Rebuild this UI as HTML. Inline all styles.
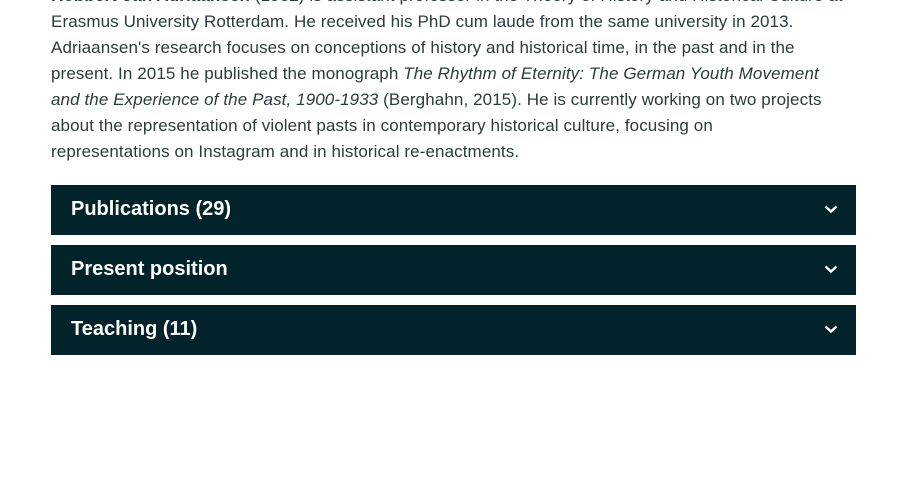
<!DOCTYPE html>
<html><head><style>
body{margin:0;background:#fff;width:903px;height:495px;overflow:hidden;font-family:"Liberation Sans",sans-serif;}
.t{position:absolute;left:51px;top:-17px;color:#2b3c3e;font-size:17px;letter-spacing:0.1px;line-height:26px;white-space:nowrap;}
.bar{position:absolute;left:51px;width:805px;height:50px;background:#03232a;color:#fff;font-weight:bold;font-size:20px;line-height:50px;}
.bar span{position:absolute;left:20px;top:-1px;}
.bar svg{position:absolute;left:773px;top:20px;}
</style></head><body>
<div class="t">
<b>Robbert-Jan Adriaansen</b> (1982) is assistant professor in the Theory of History and Historical Culture at<br>
Erasmus University Rotterdam. He received his PhD cum laude from the same university in 2013.<br>
Adriaansen's research focuses on conceptions of history and historical time, in the past and in the<br>
present. In 2015 he published the monograph <i>The Rhythm of Eternity: The German Youth Movement</i><br>
<i>and the Experience of the Past, 1900-1933</i> (Berghahn, 2015). He is currently working on two projects<br>
about the representation of violent pasts in contemporary historical culture, focusing on<br>
representations on Instagram and in historical re-enactments.
</div>
<div class="bar" style="top:185px"><span>Publications (29)</span><svg width="14" height="9"><path d="M1.5 1.5L7 6.5L12.5 1.5" stroke="#fff" stroke-width="2.4" fill="none"/></svg></div>
<div class="bar" style="top:245px"><span>Present position</span><svg width="14" height="9"><path d="M1.5 1.5L7 6.5L12.5 1.5" stroke="#fff" stroke-width="2.4" fill="none"/></svg></div>
<div class="bar" style="top:305px"><span>Teaching (11)</span><svg width="14" height="9"><path d="M1.5 1.5L7 6.5L12.5 1.5" stroke="#fff" stroke-width="2.4" fill="none"/></svg></div>
</body></html>
